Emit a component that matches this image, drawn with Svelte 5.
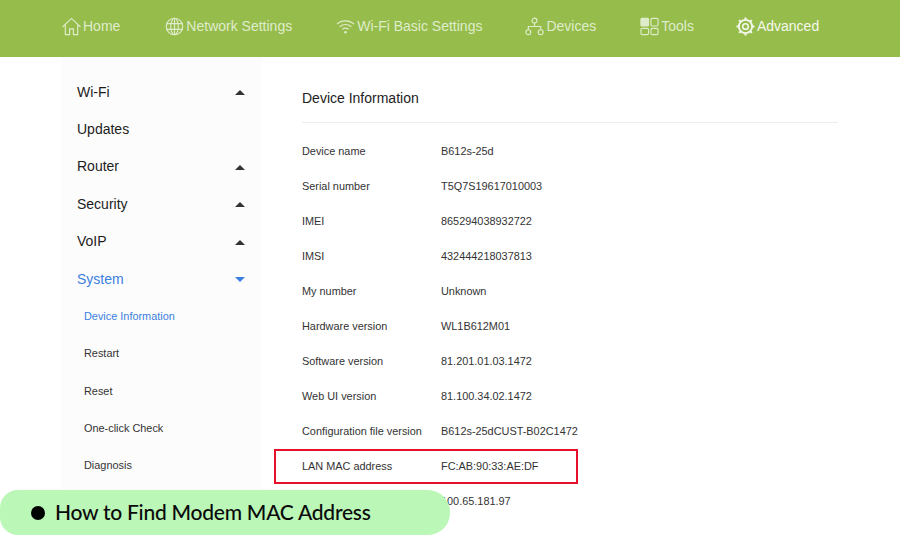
<script>
    const nav = [
        { label: 'Home', icon: 'home', gap: 45 },
        { label: 'Network Settings', icon: 'globe', gap: 44 },
        { label: 'Wi-Fi Basic Settings', icon: 'wifi', gap: 43 },
        { label: 'Devices', icon: 'devices', gap: 44 },
        { label: 'Tools', icon: 'tools', gap: 42 },
        { label: 'Advanced', icon: 'gear', gap: 0 }
    ];

    const menu = [
        { label: 'Wi-Fi', arrow: 'up' },
        { label: 'Updates' },
        { label: 'Router', arrow: 'up' },
        { label: 'Security', arrow: 'up' },
        { label: 'VoIP', arrow: 'up' },
        { label: 'System', arrow: 'down', active: true }
    ];

    const submenu = ['Device Information', 'Restart', 'Reset', 'One-click Check', 'Diagnosis'];

    // the label of the last row is hidden behind the pill in the screenshot
    const rows = [
        ['Device name', 'B612s-25d'],
        ['Serial number', 'T5Q7S19617010003'],
        ['IMEI', '865294038932722'],
        ['IMSI', '432444218037813'],
        ['My number', 'Unknown'],
        ['Hardware version', 'WL1B612M01'],
        ['Software version', '81.201.01.03.1472'],
        ['Web UI version', '81.100.34.02.1472'],
        ['Configuration file version', 'B612s-25dCUST-B02C1472'],
        ['LAN MAC address', 'FC:AB:90:33:AE:DF'],
        ['', '100.65.181.97']
    ];
</script>

<div class="page">
    <header>
        {#each nav as item}
            <div class="nav-item" class:strong={item.icon === 'gear'} style="margin-right: {item.gap}px">
                <svg class="nav-icon" viewBox="0 0 20 20" fill="none" stroke="currentColor" stroke-width="1.2">
                    {#if item.icon === 'home'}
                        <path d="M0.5 10.5 L10 1.5 L19.5 10.5" />
                        <path d="M3.5 8.5 V18.5 H8 V12.5 H12 V18.5 H16.5 V8.5" />
                    {:else if item.icon === 'globe'}
                        <circle cx="10" cy="10" r="8.7" />
                        <ellipse cx="10" cy="10" rx="4" ry="8.7" />
                        <path d="M1.3 7 H18.7 M1.3 13 H18.7 M10 1.3 V18.7" />
                    {:else if item.icon === 'wifi'}
                        <path d="M1 7.5 C6 3 14 3 19 7.5 M3.8 10.3 C7.5 7.2 12.5 7.2 16.2 10.3 M6.6 13 C8.6 11.4 11.4 11.4 13.4 13" />
                        <circle cx="10" cy="16" r="1.3" fill="currentColor" stroke="none" />
                    {:else if item.icon === 'devices'}
                        <circle cx="10" cy="3.8" r="2.6" />
                        <circle cx="3.5" cy="16" r="2.6" />
                        <circle cx="16.5" cy="16" r="2.6" />
                        <path d="M10 6.4 V10 M3.5 13.4 V10 H16.5 V13.4" />
                    {:else if item.icon === 'tools'}
                        <rect x="1" y="1.5" width="8" height="8" rx="1" fill="currentColor" />
                        <rect x="11.5" y="1.5" width="7.5" height="8" rx="1.5" />
                        <rect x="1" y="12" width="8" height="6.5" rx="1.5" />
                        <rect x="11.5" y="12" width="7.5" height="6.5" rx="1.5" />
                    {:else}
                        <circle cx="10" cy="10" r="7" stroke-width="2" />
                        <circle cx="10" cy="10" r="3" stroke-width="1.6" />
                        <path d="M10 0.5 V3 M10 17 V19.5 M0.5 10 H3 M17 10 H19.5 M3.3 3.3 L5 5 M15 15 L16.7 16.7 M3.3 16.7 L5 15 M15 5 L16.7 3.3" stroke-width="2.2" />
                    {/if}
                </svg>
                <span>{item.label}</span>
            </div>
        {/each}
    </header>

    <div class="content">
        <aside>
            {#each menu as item}
                <div class="menu-item" class:active={item.active}>
                    <span>{item.label}</span>
                    {#if item.arrow}
                        <i class="arrow {item.arrow}"></i>
                    {/if}
                </div>
            {/each}
            {#each submenu as sub, i}
                <div class="sub-item" class:active={i === 0}>{sub}</div>
            {/each}
        </aside>

        <main>
            <h2>Device Information</h2>
            <div class="rows">
                {#each rows as [name, value]}
                    <div class="row">
                        <span class="name">{name}</span>
                        <span>{value}</span>
                        {#if name === 'LAN MAC address'}
                            <div class="highlight"></div>
                        {/if}
                    </div>
                {/each}
            </div>
        </main>
    </div>

    <div class="pill">
        <i class="dot"></i>
        <span>How to Find Modem MAC Address</span>
    </div>
</div>

<style>
    :global(body) {
        margin: 0;
        background: #fff;
    }

    .page {
        position: relative;
        width: 900px;
        height: 550px;
        overflow: hidden;
        font-family: "Liberation Sans", Arial, sans-serif;
        color: #222;
    }

    header {
        display: flex;
        align-items: center;
        height: 57px;
        padding: 0 0 5px 62px;
        box-sizing: border-box;
        background: #96bc4b;
        color: #dfeccb;
        font-size: 14px;
    }

    .nav-item {
        display: flex;
        align-items: center;
        gap: 2px;
    }

    .nav-item.strong {
        color: #f4f8ec;
    }

    .nav-icon {
        width: 19px;
        height: 19px;
    }

    .content {
        display: flex;
        padding-left: 62px;
    }

    aside {
        width: 200px;
        height: 478px;
        padding: 16px 15px 0;
        box-sizing: border-box;
        background: #fcfcfc;
        flex-shrink: 0;
    }

    .menu-item {
        display: flex;
        align-items: center;
        justify-content: space-between;
        height: 37.4px;
        padding-right: 2px;
        font-size: 14px;
        color: #1c1c1c;
    }

    .sub-item {
        display: flex;
        align-items: center;
        height: 37.3px;
        padding-left: 7px;
        font-size: 10.9px;
        color: #333;
    }

    .active {
        color: #3b7fe0;
    }

    .arrow {
        width: 0;
        height: 0;
        margin-top: 2px;
        border-left: 5px solid transparent;
        border-right: 5px solid transparent;
    }

    .arrow.up {
        border-bottom: 5px solid #333;
    }

    .arrow.down {
        border-top: 5px solid #3b7fe0;
    }

    main {
        width: 536px;
        padding: 33px 0 0 40px;
    }

    h2 {
        margin: 0;
        height: 32px;
        border-bottom: 1px solid #eeeeee;
        font-size: 14px;
        font-weight: normal;
        line-height: 16px;
        color: #222;
    }

    .rows {
        padding-top: 10px;
    }

    .row {
        position: relative;
        display: flex;
        align-items: center;
        height: 35px;
        font-size: 10.9px;
        color: #333;
    }

    .name {
        width: 139px;
    }

    .highlight {
        position: absolute;
        left: -28px;
        top: 1px;
        width: 304px;
        height: 35px;
        box-sizing: border-box;
        border: 2px solid #e8112d;
    }

    .pill {
        position: absolute;
        left: 0;
        top: 490px;
        display: flex;
        align-items: center;
        gap: 24px;
        width: 450px;
        height: 45px;
        padding: 0 0 3px 31px;
        box-sizing: border-box;
        background: #bbf7b7;
        border-radius: 18px 22px 22px 18px;
        font-family: Lato, sans-serif;
        font-size: 21px;
        font-weight: 500;
        letter-spacing: -0.25px;
        color: #0a0a0a;
    }

    .dot {
        width: 14px;
        height: 14px;
        margin-top: 3px;
        margin-right: -14px;
        border-radius: 50%;
        background: #000;
    }
</style>
